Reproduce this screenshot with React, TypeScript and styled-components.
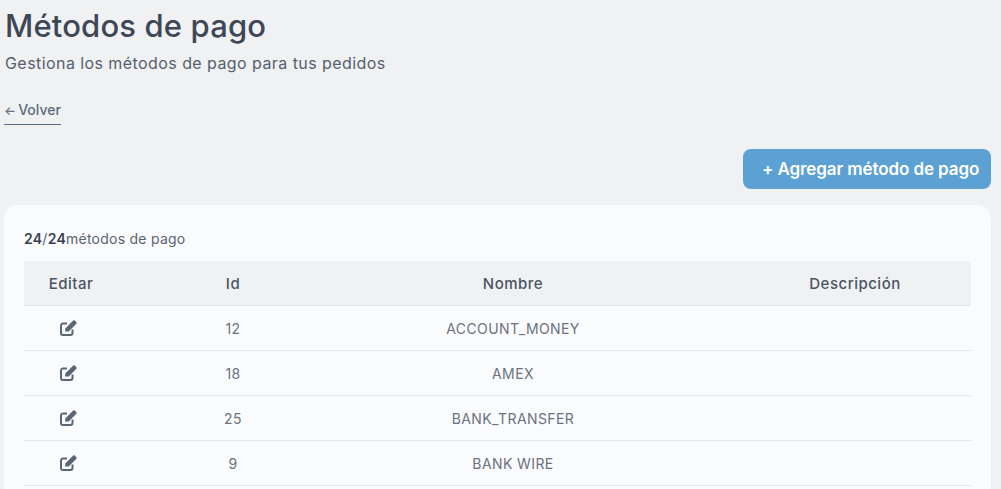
import styled, { createGlobalStyle } from "styled-components";

const paymentMethods = [
  { id: 12, name: "ACCOUNT_MONEY" },
  { id: 18, name: "AMEX" },
  { id: 25, name: "BANK_TRANSFER" },
  { id: 9, name: "BANK WIRE" },
];

function EditIcon() {
  return <svg width="17" height="16" viewBox="0 0 17 16" aria-hidden="true">
    <path
      d="M7 3.5H3A2 2 0 0 0 1 5.5V13A2 2 0 0 0 3 15H10.5A2 2 0 0 0 12.5 13V9.5"
      fill="none"
      stroke="currentColor"
      strokeWidth="2"
    />
    <path
      d="M5 11.5L5.5 8.3L13.2 0.6Q14 0 14.8 0.6L16.4 2.2Q17 3 16.4 3.8L8.7 11.5Z"
      fill="currentColor"
    />
  </svg>;
}

export default function App() {
  return <Page>
    <GlobalStyle />
    <Title>Métodos de pago</Title>
    <Subtitle>Gestiona los métodos de pago para tus pedidos</Subtitle>
    <BackLink href="#"><BackArrow>←</BackArrow> Volver</BackLink>
    <Actions>
      <AddButton>+ Agregar método de pago</AddButton>
    </Actions>
    <Card>
      <Count><strong>24</strong>/<strong>24</strong>métodos de pago</Count>
      <HeaderRow>
        <HeaderCell>Editar</HeaderCell>
        <HeaderCell>Id</HeaderCell>
        <HeaderCell>Nombre</HeaderCell>
        <DescriptionHeader>Descripción</DescriptionHeader>
      </HeaderRow>
      {paymentMethods.map(method =>
        <Row key={method.id}>
          <EditCell><EditIcon /></EditCell>
          <Cell>{method.id}</Cell>
          <Cell>{method.name}</Cell>
          <Cell />
        </Row>
      )}
    </Card>
  </Page>;
}

const GlobalStyle = createGlobalStyle`
  html, body {
    margin: 0;
    height: 489px;
    overflow: hidden;
    background: #f0f1f3;
  }
  body {
    font-family: "Inter", "Liberation Sans", sans-serif;
    color: #4b5563;
  }
`;

const Page = styled.div`
  display: flex;
  flex-direction: column;
  align-items: flex-start;
  padding: 7px 10px 0 4px;
`;

const Title = styled.h1`
  margin: 0 0 0 1px;
  font-size: 31px;
  line-height: 38px;
  font-weight: 500;
  letter-spacing: 0.15px;
  color: #3e4756;
`;

const Subtitle = styled.p`
  margin: 6px 0 0 1px;
  font-size: 16px;
  line-height: 24px;
  letter-spacing: 0.43px;
  color: #555f6e;
`;

const BackLink = styled.a`
  margin-top: 25px;
  padding-bottom: 3px;
  font-size: 14px;
  line-height: 20px;
  font-weight: 500;
  color: #5c6b7e;
  text-decoration: none;
  border-bottom: 1px solid #5c6b7e;
`;

const BackArrow = styled.span`
  display: inline-block;
  margin-right: -1.5px;
  font-size: 12.5px;
  color: #6b7280;
`;

const Actions = styled.div`
  display: flex;
  justify-content: flex-end;
  width: 100%;
  margin-top: 24px;
`;

const AddButton = styled.button`
  width: 248px;
  height: 40px;
  padding: 0 8px 0 19px;
  border: 0;
  border-radius: 8px;
  background: #5ba1d4;
  color: #fff;
  font-family: inherit;
  font-size: 17px;
  font-weight: 600;
  letter-spacing: -0.1px;
  text-align: left;
`;

const Card = styled.section`
  width: 100%;
  box-sizing: border-box;
  margin-top: 16px;
  padding: 24px 20px 60px;
  border-radius: 14px;
  background: #fafbfd;
`;

const Count = styled.div`
  height: 20px;
  margin-bottom: 12px;
  font-size: 14px;
  line-height: 20px;
  letter-spacing: 0.25px;
  color: #5a6472;

  strong {
    font-weight: 600;
    color: #374151;
  }
`;

const columns = "94px 230px 330px 1fr";

const HeaderRow = styled.div`
  display: grid;
  grid-template-columns: ${columns};
  height: 44px;
  background: #f0f1f3;
  border-bottom: 1px solid #e5e7eb;
`;

const HeaderCell = styled.div`
  display: flex;
  align-items: center;
  justify-content: center;
  font-size: 15px;
  font-weight: 500;
  letter-spacing: 0.5px;
  color: #4b5563;
`;

const DescriptionHeader = styled(HeaderCell)`
  padding-left: 61px;
`;

const Row = styled.div`
  display: grid;
  grid-template-columns: ${columns};
  height: 44px;
  border-bottom: 1px solid #e5e7eb;
`;

const Cell = styled.div`
  display: flex;
  align-items: center;
  justify-content: center;
  font-size: 14px;
  letter-spacing: 0.4px;
  color: #6b7280;
`;

const EditCell = styled(Cell)`
  padding-right: 6px;
  color: #5b6675;
`;
